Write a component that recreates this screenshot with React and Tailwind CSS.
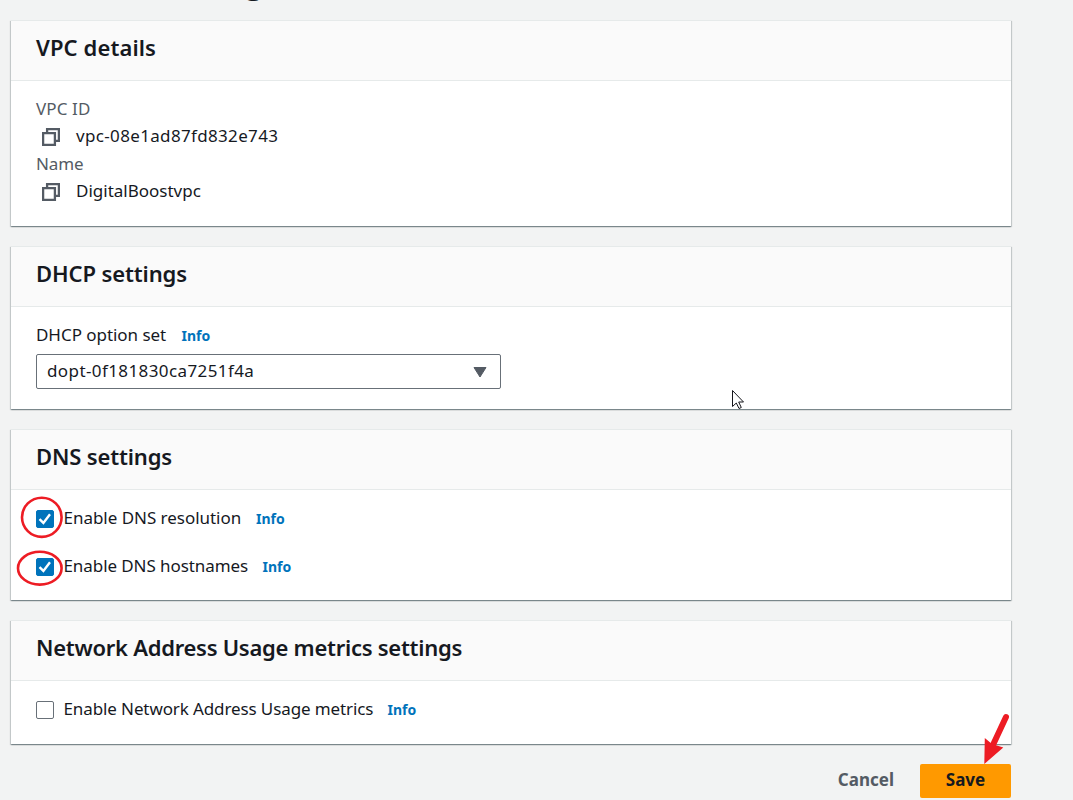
function Card({ title, titleClass, className, children }) {
  return (
    <section
      className={`flex flex-col border-t border-[#e6eaea] bg-white shadow-[0_1px_1px_0_rgba(0,28,36,0.3),1px_1px_1px_0_rgba(0,28,36,0.15),-1px_1px_1px_0_rgba(0,28,36,0.15)] ${className}`}
    >
      <header className="h-[60px] shrink-0 border-b border-[#e6eaea] bg-[#fafafa] pl-[25px] pt-3">
        <h2 className={`text-[22px] font-semibold leading-[28px] whitespace-nowrap ${titleClass}`}>{title}</h2>
      </header>
      {children}
    </section>
  );
}

function CopyIcon() {
  return (
    <svg width="18" height="18" viewBox="0 0 18 18" fill="none" stroke="#545b64" strokeWidth="2.3" className="mt-[6px] shrink-0">
      <path d="M5.1 4.5V1.1H16.9V12.9H13.5" />
      <path d="M1.1 5.1H12.9V16.9H1.1Z" />
    </svg>
  );
}

function Info() {
  return <a className="mt-px text-[14px] font-bold leading-[27px] text-[#0073bb]">Info</a>;
}

function Checkbox({ checked }) {
  return (
    <span
      className={`flex size-[18px] shrink-0 items-center justify-center rounded-[2px] border ${
        checked ? "border-[#0073bb] bg-[#0073bb]" : "border-[#687078] bg-white"
      }`}
    >
      {checked && (
        <svg width="16" height="16" viewBox="0 0 16 16" fill="none" stroke="#fff" strokeWidth="2.4" className="shrink-0">
          <path d="M2.5 8.2L6.4 11.9L13 3.3" />
        </svg>
      )}
    </span>
  );
}

function CheckRow({ checked, label, labelClass }) {
  return (
    <div className="flex h-[27px] items-start">
      <div className="mt-[6px]">
        <Checkbox checked={checked} />
      </div>
      <span className={`ml-[9.5px] shrink-0 whitespace-nowrap ${labelClass}`}>{label}</span>
      <Info />
    </div>
  );
}

export default function App() {
  return (
    <div className="relative h-[800px] w-[1073px] overflow-hidden bg-[#f2f3f3] pl-[11px] font-['Noto_Sans','Open_Sans',sans-serif] text-[17px] leading-[27px] text-[#16191f]">
      <div className="flex h-[2px] items-end">
        <h1 className="-ml-[2px] shrink-0 text-[35px] leading-[44px] tracking-[-0.2px]">Edit VPC settings</h1>
      </div>

      <main className="flex w-[1000px] flex-col gap-5 pt-[18px]">
        <Card title="VPC details" titleClass="tracking-[0.1px]" className="h-[206px]">
          <div className="flex flex-col pl-[25px] pt-[14px]">
            <div className="h-[27px] tracking-[0.1px] text-[#545b64]">VPC ID</div>
            <div className="flex h-[28px] items-start gap-4 pl-[6px]">
              <CopyIcon />
              <span className="tracking-[0.34px]">vpc-08e1ad87fd832e743</span>
            </div>
            <div className="h-[27px] tracking-[-0.15px] text-[#545b64]">Name</div>
            <div className="flex h-[28px] items-start gap-4 pl-[6px]">
              <CopyIcon />
              <span>DigitalBoostvpc</span>
            </div>
          </div>
        </Card>

        <Card title="DHCP settings" titleClass="tracking-[-0.12px]" className="h-[163px]">
          <div className="flex flex-col pl-[25px] pt-[14px]">
            <div className="flex h-[33px] items-start">
              <label className="w-[145.5px] whitespace-nowrap tracking-[-0.04px]">DHCP option set</label>
              <Info />
            </div>
            <div className="flex h-[35px] w-[465px] justify-between rounded-[2px] border border-[#687078] pl-[10px] pr-[13px] pt-[2px]">
              <span className="tracking-[0.4px]">dopt-0f181830ca7251f4a</span>
              <svg width="14" height="12" viewBox="0 0 14 12" className="mt-[9px]">
                <path d="M1 1.5H13L7 11Z" fill="#545b64" stroke="#545b64" strokeLinejoin="round" />
              </svg>
            </div>
          </div>
        </Card>

        <Card title="DNS settings" titleClass="tracking-[-0.15px]" className="h-[171px]">
          <div className="flex flex-col gap-[21px] pl-[25px] pt-[14px]">
            <CheckRow checked label="Enable DNS resolution" labelClass="w-[192.5px] tracking-[-0.03px]" />
            <CheckRow checked label="Enable DNS hostnames" labelClass="w-[199px] tracking-[-0.08px]" />
          </div>
        </Card>

        <Card title="Network Address Usage metrics settings" titleClass="tracking-[-0.27px]" className="h-[124px]">
          <div className="pl-[25px] pt-[14px]">
            <CheckRow label="Enable Network Address Usage metrics" labelClass="w-[324px] tracking-[-0.11px]" />
          </div>
        </Card>

        <div className="flex h-[34px] items-stretch justify-end font-bold">
          <button className="mr-[26px] flex pt-[2px] text-[#545b64]">Cancel</button>
          <button className="flex w-[91px] justify-center rounded-[2px] bg-[#ff9900] pt-[2px]">Save</button>
        </div>
      </main>

      <svg width="1073" height="800" viewBox="0 0 1073 800" className="pointer-events-none absolute left-0 top-0" fill="none">
        <ellipse cx="41.8" cy="517.3" rx="19.8" ry="19.6" stroke="#ed1c24" strokeWidth="2.6" />
        <ellipse cx="39.8" cy="568.2" rx="21.8" ry="16.4" stroke="#ed1c24" strokeWidth="2.6" />
        <path d="M1006 717L992 747" stroke="#ed1c24" strokeWidth="6" strokeLinecap="round" />
        <path d="M984.3 764L984.8 738L992 744L1003.3 747.5Z" fill="#ed1c24" />
        <path
          d="M732.5 390.5V406.5L736.3 403L739 408.5L741.3 407.5L738.7 402H743.5Z"
          fill="#fff"
          stroke="#16161c"
          strokeLinejoin="miter"
        />
      </svg>
    </div>
  );
}
